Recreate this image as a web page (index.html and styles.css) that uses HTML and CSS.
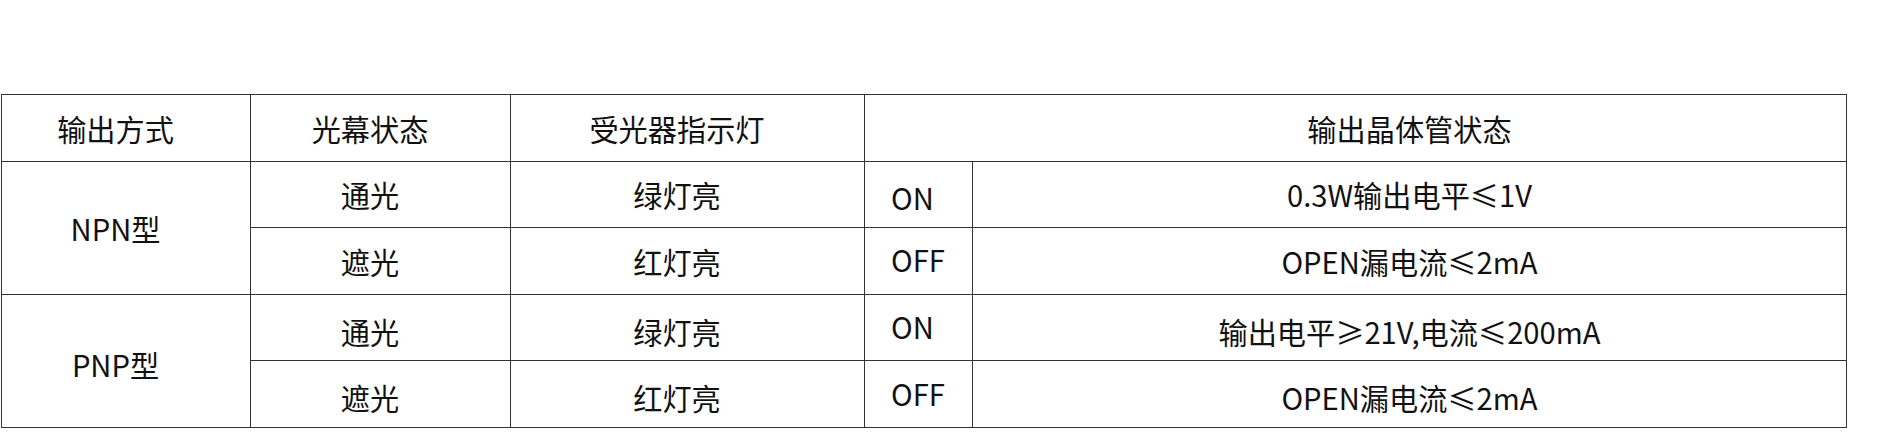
FILE: index.html
```html
<!DOCTYPE html>
<html lang="zh-CN">
<head>
<meta charset="utf-8">
<title>输出方式</title>
<link rel="stylesheet" href="styles.css">
</head>
<body>
<div class="wrap">
<table class="spec">
<colgroup>
<col class="c1"><col class="c2"><col class="c3"><col class="c4"><col class="c5">
</colgroup>
<tr class="head">
<td class="mid">输出方式</td>
<td class="mid">光幕状态</td>
<td class="mid">受光器指示灯</td>
<td class="state-head" colspan="2">输出晶体管状态</td>
</tr>
<tr>
<td class="mid" rowspan="2">NPN型</td>
<td class="mid">通光</td>
<td class="mid">绿灯亮</td>
<td class="sw sw-first">ON</td>
<td class="desc">0.3W输出电平≤1V</td>
</tr>
<tr>
<td class="mid">遮光</td>
<td class="mid">红灯亮</td>
<td class="sw">OFF</td>
<td class="desc">OPEN漏电流≤2mA</td>
</tr>
<tr class="low">
<td class="mid" rowspan="2">PNP型</td>
<td class="mid">通光</td>
<td class="mid">绿灯亮</td>
<td class="sw">ON</td>
<td class="desc">输出电平≥21V,电流≤200mA</td>
</tr>
<tr class="low">
<td class="mid">遮光</td>
<td class="mid">红灯亮</td>
<td class="sw">OFF</td>
<td class="desc">OPEN漏电流≤2mA</td>
</tr>
</table>
</div>
</body>
</html>
```
FILE: styles.css
```css
html, body {
  margin: 0;
  padding: 0;
  background: #fff;
}
.wrap {
  padding: 94px 0 0 1px;
}
.spec {
  border-collapse: collapse;
  table-layout: fixed;
  width: 1846px;
  font-family: "Noto Sans CJK SC", "Noto Sans", sans-serif;
  font-size: 29.2px;
  color: #111;
}
.c1 { width: 249px; }
.c2 { width: 260px; }
.c3 { width: 354px; }
.c4 { width: 108px; }
.c5 { width: 874px; }
.spec tr {
  height: 66.6px;
}
.spec td {
  border: 1px solid #333;
  padding: 0;
  vertical-align: middle;
  white-space: nowrap;
}
.mid {
  text-align: center;
  padding-right: 21px !important;
}
.state-head {
  text-align: center;
  padding-left: 108px !important;
}
.sw {
  text-align: left;
  padding-left: 26px !important;
  padding-bottom: 3px !important;
}
.sw.sw-first {
  padding-top: 6px !important;
  padding-bottom: 0 !important;
}
.desc {
  text-align: center;
}
.low .mid,
.low .desc {
  padding-top: 6px !important;
}
```
